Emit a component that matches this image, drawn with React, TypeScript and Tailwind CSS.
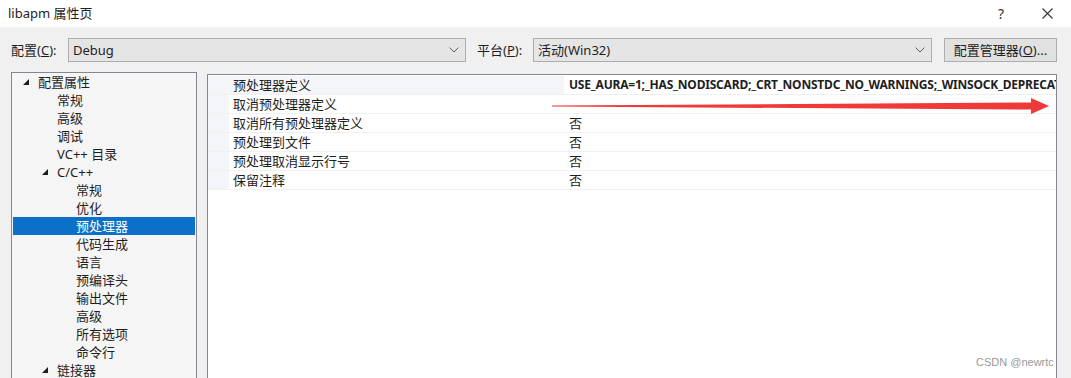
const font = "font-['Noto_Sans','Noto_Sans_CJK_SC',sans-serif]";

type TreeItem = { label: string; level: number; expander?: boolean; selected?: boolean };

const tree: TreeItem[] = [
  { label: "配置属性", level: 0, expander: true },
  { label: "常规", level: 1 },
  { label: "高级", level: 1 },
  { label: "调试", level: 1 },
  { label: "VC++ 目录", level: 1 },
  { label: "C/C++", level: 1, expander: true },
  { label: "常规", level: 2 },
  { label: "优化", level: 2 },
  { label: "预处理器", level: 2, selected: true },
  { label: "代码生成", level: 2 },
  { label: "语言", level: 2 },
  { label: "预编译头", level: 2 },
  { label: "输出文件", level: 2 },
  { label: "高级", level: 2 },
  { label: "所有选项", level: 2 },
  { label: "命令行", level: 2 },
  { label: "链接器", level: 1, expander: true },
];

const props = [
  { name: "预处理器定义", value: "USE_AURA=1;_HAS_NODISCARD;_CRT_NONSTDC_NO_WARNINGS;_WINSOCK_DEPRECATED_NO_WARNINGS;%(PreprocessorDefinitions)", bold: true, active: true },
  { name: "取消预处理器定义", value: "" },
  { name: "取消所有预处理器定义", value: "否" },
  { name: "预处理到文件", value: "否" },
  { name: "预处理取消显示行号", value: "否" },
  { name: "保留注释", value: "否" },
];

function Chevron() {
  return (
    <svg width="10" height="6" viewBox="0 0 10 6" className="shrink-0">
      <path d="M0.5 0.5 L5 5 L9.5 0.5" fill="none" stroke="#606060" strokeWidth="1" />
    </svg>
  );
}

function Triangle() {
  return (
    <svg width="6" height="6" viewBox="0 0 6 6" className="shrink-0">
      <polygon points="6,0 6,6 0,6" fill="#1e1e1e" />
    </svg>
  );
}

export default function App() {
  return (
    <div className={`relative flex h-[378px] w-[1071px] flex-col overflow-hidden bg-[#f0f0f0] text-[13px] text-[#1e1e1e] ${font}`}>
      {/* title bar */}
      <div className="flex h-[27px] shrink-0 items-center bg-white pl-[8px] pr-[18px]">
        <span className="text-[13px] leading-none">libapm 属性页</span>
        <span className="ml-auto text-[14px] leading-none text-[#333]">?</span>
        <svg width="11" height="11" viewBox="0 0 11 11" className="ml-[38px]">
          <path d="M0.5 0.5 L10.5 10.5 M10.5 0.5 L0.5 10.5" stroke="#333" strokeWidth="1.1" />
        </svg>
      </div>

      {/* config row */}
      <div className="mt-[11px] flex h-[24px] shrink-0 items-center pl-[11px]">
        <span className="w-[57px] leading-none">配置(<span className="underline">C</span>):</span>
        <div className="flex h-[24px] w-[398px] items-center justify-between border border-[#adadad] bg-[#e5e5e5] pl-[4px] pr-[6px]">
          <span className="leading-none">Debug</span>
          <Chevron />
        </div>
        <span className="ml-[11px] w-[56px] leading-none">平台(<span className="underline">P</span>):</span>
        <div className="flex h-[24px] w-[399px] items-center justify-between border border-[#adadad] bg-[#e5e5e5] pl-[4px] pr-[6px]">
          <span className="leading-none">活动(Win32)</span>
          <Chevron />
        </div>
        <div className="ml-[12px] flex h-[24px] w-[113px] items-center justify-center border border-[#adadad] bg-[#e1e1e1]">
          <span className="leading-none">配置管理器(<span className="underline">O</span>)...</span>
        </div>
      </div>

      {/* panels */}
      <div className="mt-[10px] flex flex-1 items-start pl-[11px]">
        <div className="h-[310px] w-[186px] shrink-0 border border-[#828790] bg-[#f5f5f5]">
          {tree.map((t, i) => (
            <div
              key={i}
              className={`mx-[1px] flex h-[18px] items-center ${t.selected ? "bg-[#0a70c8] text-white" : ""}`}
            >
              <div
                className={`flex shrink-0 justify-end pr-[9px] ${t.level === 0 ? "w-[25px]" : t.level === 1 ? "w-[44px]" : "w-[63px]"}`}
              >
                {t.expander ? <Triangle /> : null}
              </div>
              <span className="whitespace-nowrap leading-none">{t.label}</span>
            </div>
          ))}
        </div>

        <div className="ml-[10px] mt-[2px] h-[310px] w-[850px] shrink-0 overflow-hidden border border-[#828790] bg-white pt-[1px]">
          {props.map((p, i) => (
            <div key={i} className="flex h-[19px] border-b border-[#f0f0f0]">
              <div className="w-[21px] shrink-0 bg-[#f3f5f9]" />
              <div className={`flex w-[336px] shrink-0 items-center border-r border-white pl-[4px] ${p.active ? "bg-[#f3f5f9]" : ""}`}>
                <span className="whitespace-nowrap leading-none">{p.name}</span>
              </div>
              <div className="flex min-w-0 flex-1 items-center overflow-hidden pl-[4px]">
                <span className={`whitespace-nowrap leading-none ${p.bold ? "text-[12px] font-bold tracking-[-0.2px]" : ""}`}>{p.value}</span>
              </div>
            </div>
          ))}
        </div>
      </div>

      {/* red arrow annotation */}
      <svg className="pointer-events-none absolute left-0 top-0" width="1071" height="378" viewBox="0 0 1071 378">
        <polygon points="552,105.6 1033,102.5 1033,109.5 552,106.6" fill="#f03a3a" />
        <polygon points="1031,98 1049,106 1031,114" fill="#f03a3a" />
      </svg>

      {/* watermark */}
      <span className="absolute left-[976px] top-[357px] text-[11px] leading-none text-[#999] font-['Liberation_Sans',sans-serif]">CSDN @newrtc</span>
    </div>
  );
}
